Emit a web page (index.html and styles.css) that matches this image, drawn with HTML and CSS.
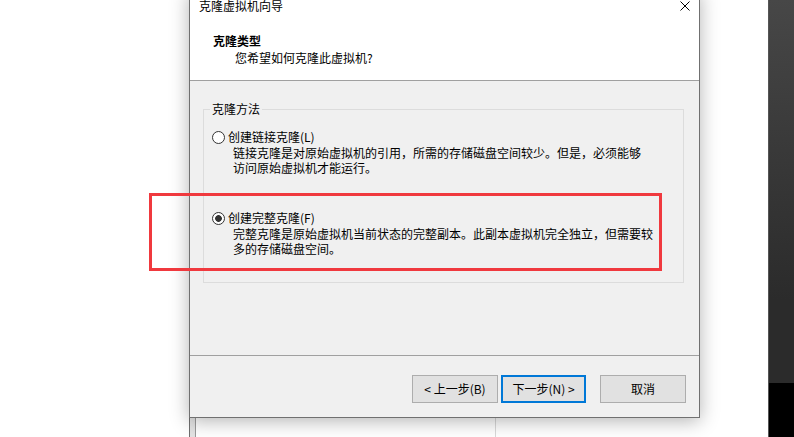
FILE: index.html
```html
<!DOCTYPE html>
<html lang="zh-CN">
<head>
<meta charset="utf-8">
<title>克隆虚拟机向导</title>
<link rel="stylesheet" href="styles.css">
</head>
<body>
<div class="desk">
  <div class="backwin">
    <div class="backwin-side"></div>
  </div>
  <div class="strip"></div>
  <div class="dialog">
    <div class="titlebar">
      <span class="title">克隆虚拟机向导</span>
      <svg class="close" width="10" height="10" viewBox="0 0 10 10" aria-hidden="true">
        <path d="M0.5 0.5 L9.5 9.5 M9.5 0.5 L0.5 9.5" stroke="#000" stroke-width="1" fill="none"/>
      </svg>
    </div>
    <div class="header">
      <div class="h-title">克隆类型</div>
      <div class="h-sub">您希望如何克隆此虚拟机?</div>
    </div>
    <div class="content">
      <fieldset class="group">
        <legend class="group-title">克隆方法</legend>
        <div class="option">
          <label class="opt-label"><input type="radio" name="clone" class="radio">创建链接克隆(L)</label>
          <div class="desc">链接克隆是对原始虚拟机的引用，所需的存储磁盘空间较少。但是，必须能够<br>访问原始虚拟机才能运行。</div>
        </div>
        <div class="option option-full">
          <label class="opt-label"><input type="radio" name="clone" class="radio" checked>创建完整克隆(F)</label>
          <div class="desc">完整克隆是原始虚拟机当前状态的完整副本。此副本虚拟机完全独立，但需要较<br>多的存储磁盘空间。</div>
        </div>
      </fieldset>
    </div>
    <div class="footer">
      <div class="nav">
        <button class="btn btn-prev" type="button">&lt; 上一步(B)</button>
        <button class="btn btn-next" type="button">下一步(N) &gt;</button>
      </div>
      <button class="btn btn-cancel" type="button">取消</button>
    </div>
  </div>
  <div class="annot"></div>
</div>
</body>
</html>
```

FILE: styles.css
```css
html, body {
  margin: 0;
  padding: 0;
  background: #fff;
}

body {
  font-family: "Noto Sans CJK SC", "Noto Sans", sans-serif;
  font-size: 12px;
  color: #000;
}

.desk {
  position: relative;
  width: 794px;
  height: 437px;
  overflow: hidden;
  background: #fff;
}

/* window behind the dialog */
.backwin {
  position: absolute;
  left: 189px;
  top: 360px;
  width: 307px;
  height: 100px;
  box-sizing: border-box;
  border-left: 1px solid #6e6e6e;
  border-right: 1px solid #d9d9d9;
  background: #fff;
  display: flex;
}

.backwin-side {
  width: 5px;
  background: #e3e3e3;
  border-right: 1px solid #9a9a9a;
}

/* dark window at the right edge */
.strip {
  position: absolute;
  left: 768px;
  top: 0;
  width: 26px;
  height: 437px;
  border-left: 1px solid #555;
  box-sizing: border-box;
  background: linear-gradient(#474747 0, #2b2b2b 300px, #2b2b2b 383px, #000 383px);
}

/* dialog window */
.dialog {
  position: absolute;
  left: 189px;
  top: -10px;
  width: 511px;
  box-sizing: border-box;
  border: 1px solid #707070;
  background: #f0f0f0;
  box-shadow: 0 3px 18px rgba(0, 0, 0, 0.3);
  display: flex;
  flex-direction: column;
}

.titlebar {
  height: 30px;
  background: #fff;
  display: flex;
  align-items: center;
  justify-content: space-between;
  padding: 0 9px;
  line-height: 16px;
}

.close {
  display: block;
}

.header {
  background: #fff;
  padding: 12px 0 14px 0;
  border-bottom: 1px solid #a0a0a0;
  line-height: 16px;
}

.h-title {
  font-weight: bold;
  margin-left: 23px;
}

.h-sub {
  margin-top: 1px;
  margin-left: 45px;
}

.content {
  height: 274px;
  box-sizing: border-box;
  padding-top: 20px;
}

.group {
  margin: 0 15px 0 13px;
  padding: 12px 0 26px 8px;
  border: 1px solid #dcdcdc;
  min-inline-size: 0;
}

.group-title {
  padding: 0 2px;
  margin-left: -2px;
  line-height: 16px;
}

.option-full {
  margin-top: 35px;
}

.opt-label {
  display: flex;
  align-items: center;
  gap: 3px;
  height: 16px;
  line-height: 16px;
}

.radio {
  appearance: none;
  -webkit-appearance: none;
  margin: 0;
  width: 13px;
  height: 13px;
  box-sizing: border-box;
  border: 1px solid #333;
  border-radius: 50%;
  background: #fff;
  flex-shrink: 0;
}

.radio:checked {
  background: radial-gradient(circle, #333 0, #333 3px, #fff 3.7px);
}

.desc {
  margin-left: 21px;
  line-height: 15px;
  white-space: nowrap;
}

.footer {
  border-top: 1px solid #a0a0a0;
  padding: 19px 13px 14px;
  display: flex;
  justify-content: flex-end;
  gap: 14px;
}

.nav {
  display: flex;
  gap: 3px;
}

.btn {
  height: 28px;
  width: 86px;
  box-sizing: border-box;
  padding: 0;
  margin: 0;
  background: #e1e1e1;
  border: 1px solid #adadad;
  font-family: inherit;
  font-size: 12px;
  color: #000;
  line-height: 16px;
}

.btn-next {
  width: 85px;
  border: 2px solid #0078d7;
}

/* red annotation rectangle drawn over the screenshot */
.annot {
  position: absolute;
  left: 149px;
  top: 193px;
  width: 513px;
  height: 78px;
  box-sizing: border-box;
  border: 3px solid #f0393e;
  pointer-events: none;
}
```
